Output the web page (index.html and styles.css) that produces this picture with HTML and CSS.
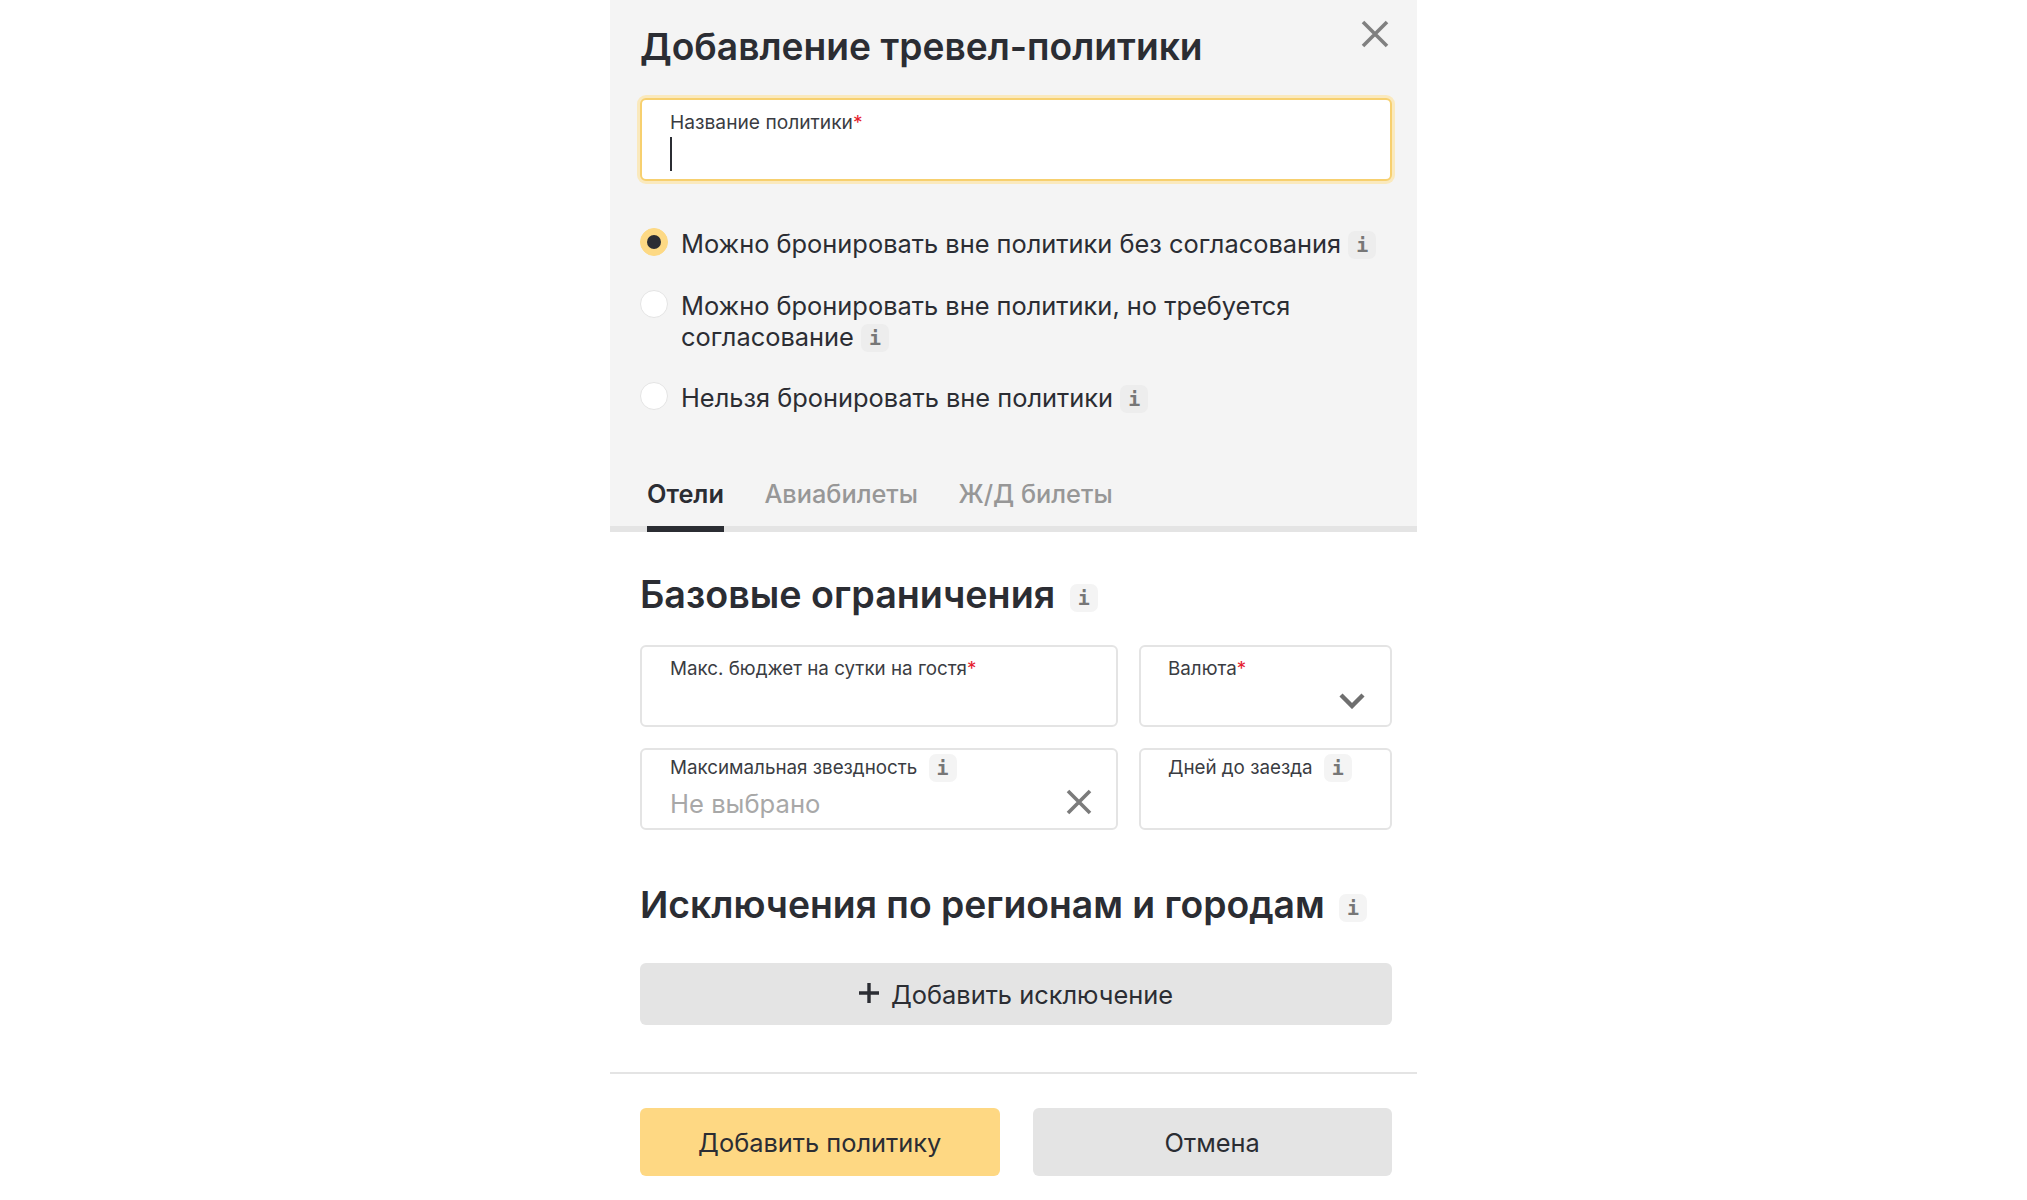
FILE: index.html
```html
<!DOCTYPE html>
<html lang="ru">
<head>
<meta charset="utf-8">
<title>Добавление тревел-политики</title>
<link rel="stylesheet" href="styles.css">
</head>
<body>
<div class="modal">
  <section class="top">
    <div class="title-row">
      <h1 class="title">Добавление тревел-политики</h1>
      <svg class="close" viewBox="0 0 28 28"><path d="M2 2L26 26M26 2L2 26"/></svg>
    </div>
    <div class="field field-focus">
      <div class="label label-top">Название политики<span class="req">*</span></div>
      <div class="caret"></div>
    </div>
    <div class="radios">
      <div class="radio-row">
        <span class="radio radio-on"><span class="dot"></span></span>
        <div class="radio-text"><span>Можно бронировать вне политики без согласования</span> <span class="info">i</span></div>
      </div>
      <div class="radio-row">
        <span class="radio"></span>
        <div class="radio-text">
          <div>Можно бронировать вне политики, но требуется</div>
          <div><span>согласование</span> <span class="info">i</span></div>
        </div>
      </div>
      <div class="radio-row">
        <span class="radio"></span>
        <div class="radio-text"><span>Нельзя бронировать вне политики</span> <span class="info">i</span></div>
      </div>
    </div>
    <div class="tabs">
      <div class="tab tab-active">Отели</div>
      <div class="tab">Авиабилеты</div>
      <div class="tab">Ж/Д билеты</div>
    </div>
  </section>
  <section class="body">
    <h2 class="heading heading-first">Базовые ограничения <span class="info info-h">i</span></h2>
    <div class="grid">
      <div class="field">
        <div class="label">Макс. бюджет на сутки на гостя<span class="req">*</span></div>
      </div>
      <div class="field field-side">
        <div class="label">Валюта<span class="req">*</span></div>
        <svg class="chevron" viewBox="0 0 26 16"><path d="M2 2L13 13L24 2"/></svg>
      </div>
      <div class="field field-low">
        <div class="label">Максимальная звездность <span class="info info-l">i</span></div>
        <div class="placeholder">Не выбрано</div>
        <svg class="clear" viewBox="0 0 26 26"><path d="M2 2L24 24M24 2L2 24"/></svg>
      </div>
      <div class="field field-low field-side">
        <div class="label">Дней до заезда <span class="info info-l">i</span></div>
      </div>
    </div>
    <h2 class="heading heading-second">Исключения по регионам и городам <span class="info info-h">i</span></h2>
    <button class="btn btn-add"><svg class="plus" viewBox="0 0 20 20"><path d="M10 0V20M0 10H20"/></svg>Добавить исключение</button>
  </section>
  <footer class="footer">
    <button class="btn btn-primary">Добавить политику</button>
    <button class="btn btn-cancel">Отмена</button>
  </footer>
</div>
</body>
</html>
```
FILE: styles.css
```css
* { box-sizing: border-box; }
html, body { margin: 0; height: 100%; background: #fff; }
body { font-family: Inter, "Noto Sans", sans-serif; color: #2b2d33; overflow: hidden; }
.modal { width: 807px; height: 1200px; margin: 0 auto; background: #fff; }
.top { background: #f4f4f4; padding: 0 25px 0 30px; height: 532px; border-bottom: 6px solid #e4e4e4; position: relative; }
.title-row { display: flex; justify-content: space-between; height: 98px; }
.title { margin: 22px 0 0; font-size: 37.2px; line-height: 49px; font-weight: 600; }
.close { width: 28px; height: 28px; margin: 20px 3px 0 0; fill: none; stroke: #808080; stroke-width: 3.6; }
.field { position: relative; background: #fff; border: 2px solid #e4e4e4; border-radius: 6px; padding: 9px 28px 0; height: 82px; }
.field-low { padding-top: 4px; }
.field-side { padding-left: 27px; }
.field-focus { border-color: #f7d06f; box-shadow: 0 0 0 3px #fae9bd; height: 83px; }
.label { font-size: 18.8px; line-height: 26px; color: #3a3c42; display: flex; align-items: center; white-space: pre; }
.label-top { font-size: 19.2px; }
.req { color: #e5202e; }
.caret { width: 2px; height: 34px; background: #2b2d33; margin-top: 2px; }
.radios { margin-top: 47px; display: flex; flex-direction: column; gap: 30.5px; }
.radio-row { display: flex; gap: 13px; align-items: flex-start; }
.radio { flex: none; width: 28px; height: 28px; border-radius: 50%; background: #fff; border: 1px solid #e4e4e4; display: flex; align-items: center; justify-content: center; }
.radio-on { background: #fdd984; border-color: #fdd984; }
.dot { width: 14px; height: 14px; border-radius: 50%; background: #2b2d33; }
.radio-text { font-size: 25.4px; line-height: 31px; color: #2b2d33; width: 710px; }
.info { display: inline-flex; align-items: center; justify-content: center; vertical-align: 1px; width: 28px; height: 28px; border-radius: 7px; background: #ededed; color: #777; font-family: "DejaVu Sans Mono", monospace; font-size: 20px; font-weight: 700; line-height: 1; }
.info-h { background: #f4f4f4; vertical-align: 3px; margin-left: 5px; }
.info-l { background: #f4f4f4; margin-left: 6px; }
.tabs { position: absolute; left: 37px; top: 474px; display: flex; gap: 40.5px; }
.tab { font-size: 25.3px; line-height: 40px; height: 58px; font-weight: 500; color: #979797; }
.tab-active { color: #2b2d33; font-weight: 600; border-bottom: 6px solid #2b2d33; }
.body { padding: 0 25px 0 30px; height: 542px; border-bottom: 2px solid #e4e4e4; }
.heading { margin: 0; font-size: 37.3px; line-height: 49px; font-weight: 600; color: #2b2d33; }
.heading-first { padding-top: 38px; height: 113px; font-size: 37.7px; }
.heading-second { margin-top: 50px; height: 83px; }
.grid { display: grid; grid-template-columns: 478px 253px; column-gap: 21px; row-gap: 21px; }
.placeholder { font-size: 25.6px; line-height: 34px; color: #a8a8a8; margin-top: 5px; }
.chevron { position: absolute; right: 25px; bottom: 16px; width: 26px; height: 16px; fill: none; stroke: #6f6f6f; stroke-width: 4.4; }
.clear { position: absolute; right: 24px; bottom: 13px; width: 26px; height: 26px; fill: none; stroke: #7b7b7b; stroke-width: 3.6; }
.btn { display: flex; align-items: center; justify-content: center; border: 0; border-radius: 6px; font-family: inherit; font-size: 25.4px; color: #2b2d33; background: #e4e4e4; }
.btn-add { width: 752px; height: 62px; gap: 12px; font-weight: 400; }
.plus { width: 20px; height: 20px; fill: none; stroke: #2b2d33; stroke-width: 3.4; margin-top: -2px; }
.footer { display: flex; gap: 33px; padding: 34px 25px 0 30px; }
.btn-primary, .btn-cancel { flex: 1; height: 68px; }
.btn-primary { background: #fed883; }
```
